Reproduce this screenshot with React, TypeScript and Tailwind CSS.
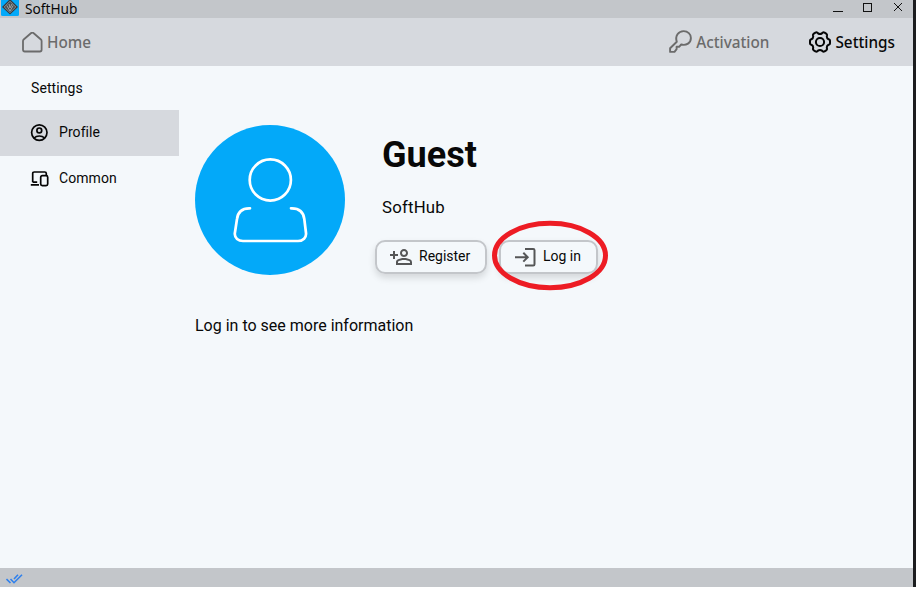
import type { ReactNode } from "react";
import { MdOutlinePersonAddAlt } from "react-icons/md";

function LogoIcon() {
  return (
    <svg className="ml-px h-4 w-[18px] shrink-0" viewBox="0 0 18 16">
      <path d="M0 0H18V14.5Q18 16 16.5 16H1.5Q0 16 0 14.5Z" fill="#03a9f9" />
      <path d="M9 -1L17 7L9 14.5L1 7Z" fill="#353b40" />
      <path d="M9 1.2L14.8 7L9 12.6L3.2 7Z" fill="#4b5053" stroke="#8d9294" strokeWidth=".9" />
      <path d="M5.8 5.5L9 11L12.2 5.5M8 4l1 4 2-4" fill="none" stroke="#a0a4a5" strokeWidth="1" />
    </svg>
  );
}

function HomeIcon() {
  return (
    <svg className="h-[21px] w-[21px] shrink-0" viewBox="0 0 21 21" fill="none" stroke="#6b6b6b" strokeWidth="1.8" strokeLinejoin="round">
      <path d="M1 9Q1 8.1 1.7 7.5L8.9 1.2Q10.3 0 11.7 1.2L18.9 7.5Q19.6 8.1 19.6 9V17.8Q19.6 19.5 17.9 19.5H2.7Q1 19.5 1 17.8Z" />
    </svg>
  );
}

function KeyIcon() {
  return (
    <svg className="relative -top-px h-[23px] w-[23px] shrink-0" viewBox="0 0 23 23" fill="none" stroke="#6b6b6b" strokeWidth="1.9" strokeLinejoin="round">
      <path d="M7.8 11.8C5.8 5.8 9.4 1.1 14.7 1.1C18.8 1.1 21.9 4.1 21.9 7.9C21.9 12.8 17.4 16 12.2 14.5L10.1 16.8H7.6V19.2L5.5 21.9H1.1V18.3Z" />
    </svg>
  );
}

function GearIcon() {
  return (
    <svg className="h-[22px] w-[22px] shrink-0" viewBox="0 0 22 22" fill="none" stroke="#050505" strokeWidth="2" strokeLinejoin="round">
      <path d="M6.4 1.7Q7.3 1 8.2 1.6L9.2 2.5Q11 3.4 12.8 2.5L13.8 1.6Q14.7 1 15.6 1.7L17.5 2.9Q18.1 3.4 18 4.2L17.8 5.5Q17.9 7.4 19.2 8L20.4 8.6Q21 9 21 9.8V12.2Q21 13 20.4 13.4L19.2 14Q17.9 14.6 17.8 16.5L18 17.8Q18.1 18.6 17.5 19.1L15.6 20.3Q14.7 21 13.8 20.4L12.8 19.5Q11 18.6 9.2 19.5L8.2 20.4Q7.3 21 6.4 20.3L4.5 19.1Q3.9 18.6 4 17.8L4.2 16.5Q4.1 14.6 2.8 14L1.6 13.4Q1 13 1 12.2V9.8Q1 9 1.6 8.6L2.8 8Q4.1 7.4 4.2 5.5L4 4.2Q3.9 3.4 4.5 2.9Z" />
      <circle cx="11" cy="11" r="4.1" />
    </svg>
  );
}

function ProfileIcon() {
  return (
    <svg className="h-[18px] w-[18px]" viewBox="0 0 18 18" fill="none" stroke="#050505" strokeWidth="1.7">
      <circle cx="9.3" cy="8.6" r="7.7" />
      <circle cx="9.3" cy="6.4" r="2.4" />
      <path d="M4 14C6.8 11.3 11.8 11.3 14.6 14" />
    </svg>
  );
}

function DevicesIcon() {
  return (
    <svg className="h-[17px] w-[19px]" viewBox="0 0 19 17" fill="none" stroke="#050505" strokeWidth="1.7" strokeLinejoin="round">
      <path d="M2.7 11.2V2.6Q2.7 1 4.3 1H14.8Q16.3 1 16.3 2.6V4.5M.8 13.9H9M2.7 11.2H7.2" />
      <rect x="10.7" y="4.7" width="7" height="10" rx="1.6" />
    </svg>
  );
}

function LoginIcon() {
  return (
    <svg className="h-[19px] w-[21px]" viewBox="0 0 21 19" fill="none" stroke="#555657" strokeWidth="2">
      <path d="M10 1H18.2Q19.5 1 19.5 2.3V16.2Q19.5 17.5 18.2 17.5H10M0 9.2H13M8.3 4.8L12.7 9.2L8.3 13.6" />
    </svg>
  );
}

function NavItem({ icon, label, active = false }: { icon: ReactNode; label: string; active?: boolean }) {
  return (
    <div className={active ? "flex h-full items-center gap-1 text-[#080808]" : "flex h-full items-center gap-1 text-[#6b6b6b]"}>
      {icon}
      <span className="whitespace-nowrap text-[15.3px] font-medium">{label}</span>
    </div>
  );
}

function SideItem({ icon, label, active = false }: { icon: ReactNode; label: string; active?: boolean }) {
  return (
    <div className={active ? "flex h-[46px] items-center bg-[#d6d9de] pl-[30px]" : "flex h-[46px] items-center pl-[30px]"}>
      <span className="flex w-[29px]">{icon}</span>
      <span className="relative -top-px text-[14px] font-[450] tracking-[.08px]">{label}</span>
    </div>
  );
}

export default function App() {
  return (
    <div className="h-[589px] w-[918px] overflow-hidden bg-white font-['Roboto',sans-serif] text-[#080808]">
      <div className="flex h-[587px] w-[916px] flex-col border-r-[3px] border-[#1c1d1f] bg-[#f4f8fb]">
        <header className="flex h-[18px] shrink-0 items-start justify-between bg-[#c3c6ca] font-['Noto_Sans',sans-serif]">
          <div className="flex items-start gap-[6px]">
            <LogoIcon />
            <span className="text-[13.7px] leading-[17px]">SoftHub</span>
          </div>
          <svg className="mr-[9px] h-[17px] w-[72px]" viewBox="0 0 72 17" fill="none" stroke="#111" shapeRendering="crispEdges">
            <path d="M1 11.5H11M31.5 3.5H39.5V11.5H31.5ZM62 3L70 11M70 3L62 11" />
          </svg>
        </header>
        <nav className="flex h-12 shrink-0 items-center bg-[#d6d9de] pl-[22px] pr-[18px] font-['Noto_Sans',sans-serif]">
          <NavItem icon={<HomeIcon />} label="Home" />
          <div className="ml-auto flex items-center gap-10">
            <NavItem icon={<KeyIcon />} label="Activation" />
            <NavItem icon={<GearIcon />} label="Settings" active />
          </div>
        </nav>
        <div className="flex min-h-0 flex-1">
          <aside className="w-[179px] shrink-0">
            <h2 className="h-11 pl-[31px] text-[14px] font-[450] leading-[44px] tracking-[.08px]">Settings</h2>
            <SideItem icon={<ProfileIcon />} label="Profile" active />
            <SideItem icon={<DevicesIcon />} label="Common" />
          </aside>
          <main className="pl-4 pt-[59px]">
            <div className="flex">
              <svg className="h-[150px] w-[150px] shrink-0" viewBox="0 0 150 150" fill="none">
                <circle cx="75" cy="75" r="75" fill="#03a9f9" />
                <g stroke="#fff" strokeWidth="2.7" strokeLinecap="round">
                  <circle cx="75.3" cy="55" r="20.6" />
                  <path d="M55 83.3C46.7 83 42.8 87.4 42 94L39.8 108.5C39.5 113 43.3 116 48 116H103C108 116 111.5 112.5 111 108L109.3 94C108.5 87.4 104.3 83 96 83.3" />
                </g>
              </svg>
              <section className="ml-[30px] w-[235px]">
                <h1 className="pl-[7px] pt-[9px] text-[36px] font-bold leading-[42px]">Guest</h1>
                <p className="mt-[21px] pl-[7px] text-[16.8px] font-[450] leading-5 tracking-[.2px]">SoftHub</p>
                <div className="relative mt-[23px] flex gap-3">
                  <button className="flex h-[34px] w-[112px] items-center rounded-[10px] border-2 border-[#c3c6ca] pl-[12px] text-[14px] shadow-[0_4px_7px_rgba(0,0,0,.13)]">
                    <MdOutlinePersonAddAlt className="h-6 w-6 -scale-x-100 text-[#555657]" />
                    <span className="relative -top-px ml-[6px]">Register</span>
                  </button>
                  <button className="flex h-[34px] w-[99px] items-center rounded-[10px] border-2 border-[#c3c6ca] pl-[14px] text-[14px] shadow-[0_4px_7px_rgba(0,0,0,.13)]">
                    <LoginIcon />
                    <span className="relative -top-px ml-[7px] whitespace-nowrap">Log in</span>
                  </button>
                  <svg className="pointer-events-none absolute -top-5 left-[116px] h-[71px] w-[118px]" viewBox="0 0 118 71">
                    <ellipse cx="59" cy="35.5" rx="55.5" ry="32.2" fill="none" stroke="#ed1c24" strokeWidth="5" />
                  </svg>
                </div>
              </section>
            </div>
            <p className="mt-[41px] text-[16px] leading-5">Log in to see more information</p>
          </main>
        </div>
        <footer className="flex h-[19px] shrink-0 bg-[#c3c6ca] pl-[6px] pt-[6px]">
          <svg className="h-[10px] w-[17px]" viewBox="0 0 17 10" fill="none" stroke="#2f80ed" strokeWidth="1.6">
            <path d="M.5 5L4.5 9M4.5 5L8 8.7L16 .7M8 5L12 .8" />
          </svg>
        </footer>
      </div>
    </div>
  );
}
